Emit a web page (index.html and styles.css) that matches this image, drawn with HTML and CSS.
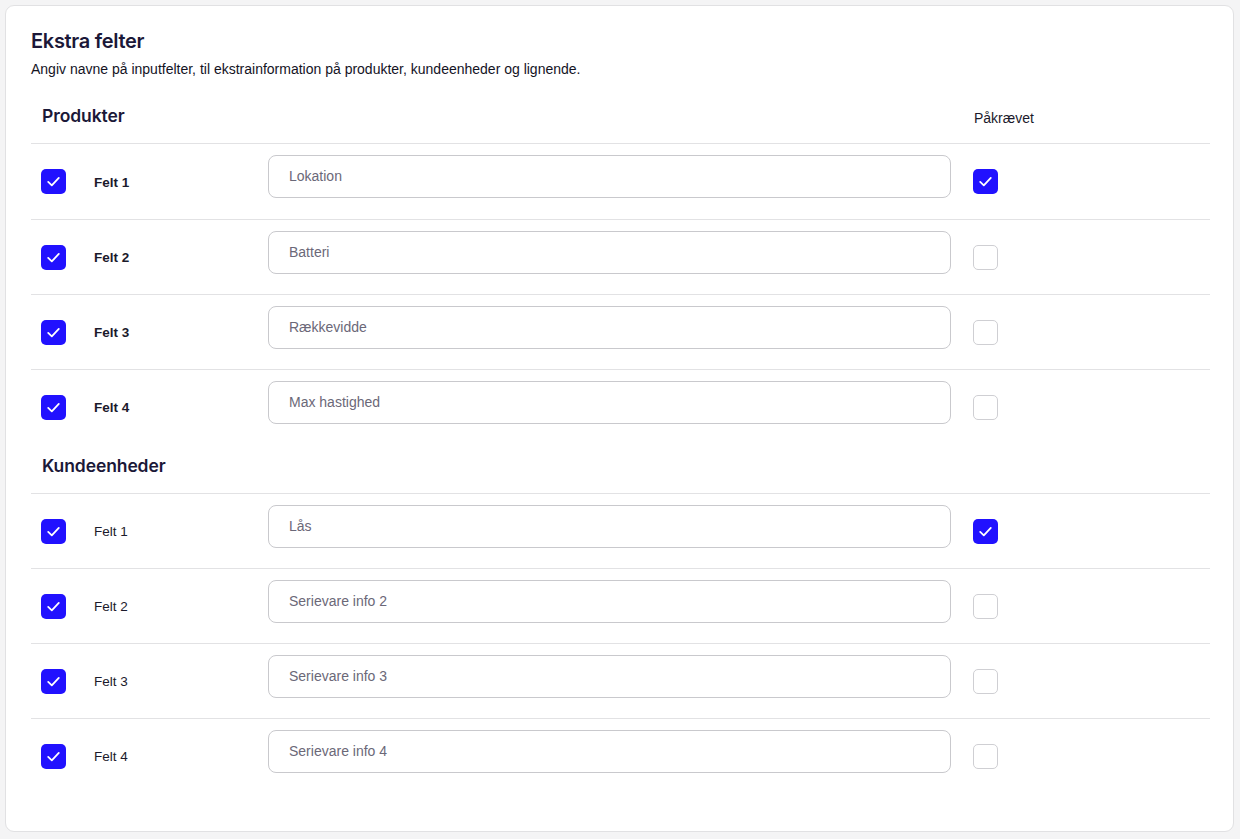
FILE: index.html
```html
<!DOCTYPE html>
<html lang="da">
<head>
<meta charset="utf-8">
<title>Ekstra felter</title>
<link rel="stylesheet" href="styles.css">
</head>
<body>
<div class="card">
  <h1 class="title">Ekstra felter</h1>
  <p class="subtitle">Angiv navne på inputfelter, til ekstrainformation på produkter, kundeenheder og lignende.</p>

  <div class="section first">
    <div class="section-head">
      <h2 class="section-title">Produkter</h2>
      <span class="req-label">Påkrævet</span>
    </div>
    <div class="row">
      <span class="cb checked"><svg viewBox="0 0 25 25"><path d="M7.2 12.9l3.6 3.4 7-7.4"/></svg></span>
      <span class="label bold">Felt 1</span>
      <div class="field"><input class="input" value="Lokation"></div>
      <span class="cb checked"><svg viewBox="0 0 25 25"><path d="M7.2 12.9l3.6 3.4 7-7.4"/></svg></span>
    </div>
    <div class="row">
      <span class="cb checked"><svg viewBox="0 0 25 25"><path d="M7.2 12.9l3.6 3.4 7-7.4"/></svg></span>
      <span class="label bold">Felt 2</span>
      <div class="field"><input class="input" value="Batteri"></div>
      <span class="cb"></span>
    </div>
    <div class="row">
      <span class="cb checked"><svg viewBox="0 0 25 25"><path d="M7.2 12.9l3.6 3.4 7-7.4"/></svg></span>
      <span class="label bold">Felt 3</span>
      <div class="field"><input class="input" value="Rækkevidde"></div>
      <span class="cb"></span>
    </div>
    <div class="row">
      <span class="cb checked"><svg viewBox="0 0 25 25"><path d="M7.2 12.9l3.6 3.4 7-7.4"/></svg></span>
      <span class="label bold">Felt 4</span>
      <div class="field"><input class="input" value="Max hastighed"></div>
      <span class="cb"></span>
    </div>
  </div>

  <div class="section second">
    <div class="section-head">
      <h2 class="section-title">Kundeenheder</h2>
    </div>
    <div class="row">
      <span class="cb checked"><svg viewBox="0 0 25 25"><path d="M7.2 12.9l3.6 3.4 7-7.4"/></svg></span>
      <span class="label">Felt 1</span>
      <div class="field"><input class="input" value="Lås"></div>
      <span class="cb checked"><svg viewBox="0 0 25 25"><path d="M7.2 12.9l3.6 3.4 7-7.4"/></svg></span>
    </div>
    <div class="row">
      <span class="cb checked"><svg viewBox="0 0 25 25"><path d="M7.2 12.9l3.6 3.4 7-7.4"/></svg></span>
      <span class="label">Felt 2</span>
      <div class="field"><input class="input" value="Serievare info 2"></div>
      <span class="cb"></span>
    </div>
    <div class="row">
      <span class="cb checked"><svg viewBox="0 0 25 25"><path d="M7.2 12.9l3.6 3.4 7-7.4"/></svg></span>
      <span class="label">Felt 3</span>
      <div class="field"><input class="input" value="Serievare info 3"></div>
      <span class="cb"></span>
    </div>
    <div class="row">
      <span class="cb checked"><svg viewBox="0 0 25 25"><path d="M7.2 12.9l3.6 3.4 7-7.4"/></svg></span>
      <span class="label">Felt 4</span>
      <div class="field"><input class="input" value="Serievare info 4"></div>
      <span class="cb"></span>
    </div>
  </div>
</div>
</body>
</html>
```
FILE: styles.css
```css
* { box-sizing: border-box; }
html, body { height: 100%; }
body {
  margin: 0;
  padding: 5px 6px 7px 5px;
  background: #f4f4f5;
  font-family: "Liberation Sans", Arial, sans-serif;
  color: #1b1a2b;
}
.card {
  background: #fff;
  border: 1px solid #e1e1e3;
  border-radius: 9px;
  padding: 24px 23px 37px 25px;
  min-height: 827px;
}
.title {
  margin: 0;
  font-family: "Inter", "Noto Sans", sans-serif;
  font-weight: 600;
  font-size: 20px;
  line-height: 22px;
  color: #1b1838;
  letter-spacing: -0.3px;
}
.subtitle {
  margin: 9px 0 0;
  font-size: 14px;
  line-height: 16px;
  color: #14131f;
}
.section-head {
  display: flex;
  align-items: center;
  height: 50px;
  padding-left: 11px;
  padding-bottom: 6px;
}
.section.first .section-head { margin-top: 16px; }
.section.first .section-head + .row { height: 76px; }
.section.second .section-head { height: 49px; }
.section-title {
  margin: 0;
  flex: 0 0 932px;
  font-family: "Inter", "Noto Sans", sans-serif;
  font-weight: 600;
  font-size: 17.5px;
  letter-spacing: -0.1px;
  color: #1b1838;
}
.req-label {
  font-size: 14px;
  color: #1b1a2b;
  margin-top: 5px;
}
.row {
  display: grid;
  grid-template-columns: 53px 174px 683px 25px;
  align-items: center;
  height: 75px;
  border-top: 1px solid #e2e2e4;
  padding-left: 10px;
}
.row .cb:last-child { margin-left: 22px; }
.cb {
  width: 25px;
  height: 25px;
  border-radius: 5px;
  border: 1px solid #cfcfd3;
  background: #fff;
  overflow: hidden;
}
.cb.checked {
  background: #2111ff;
  border: none;
}
.cb svg {
  display: block;
  width: 25px;
  height: 25px;
  fill: none;
  stroke: #fff;
  stroke-width: 1.8;
  stroke-linecap: round;
  stroke-linejoin: round;
}
.label {
  font-size: 13.5px;
  color: #1b1a2b;
  margin-top: 1px;
}
.label.bold { font-weight: 700; }
.field {
  align-self: start;
  padding-top: 11px;
}
.input {
  display: block;
  width: 100%;
  height: 43px;
  border: 1px solid #c9c9cd;
  border-radius: 8px;
  padding: 0 20px 2px;
  font-family: "Liberation Sans", Arial, sans-serif;
  font-size: 14px;
  color: #6b6878;
  background: #fff;
  outline: none;
}
```
